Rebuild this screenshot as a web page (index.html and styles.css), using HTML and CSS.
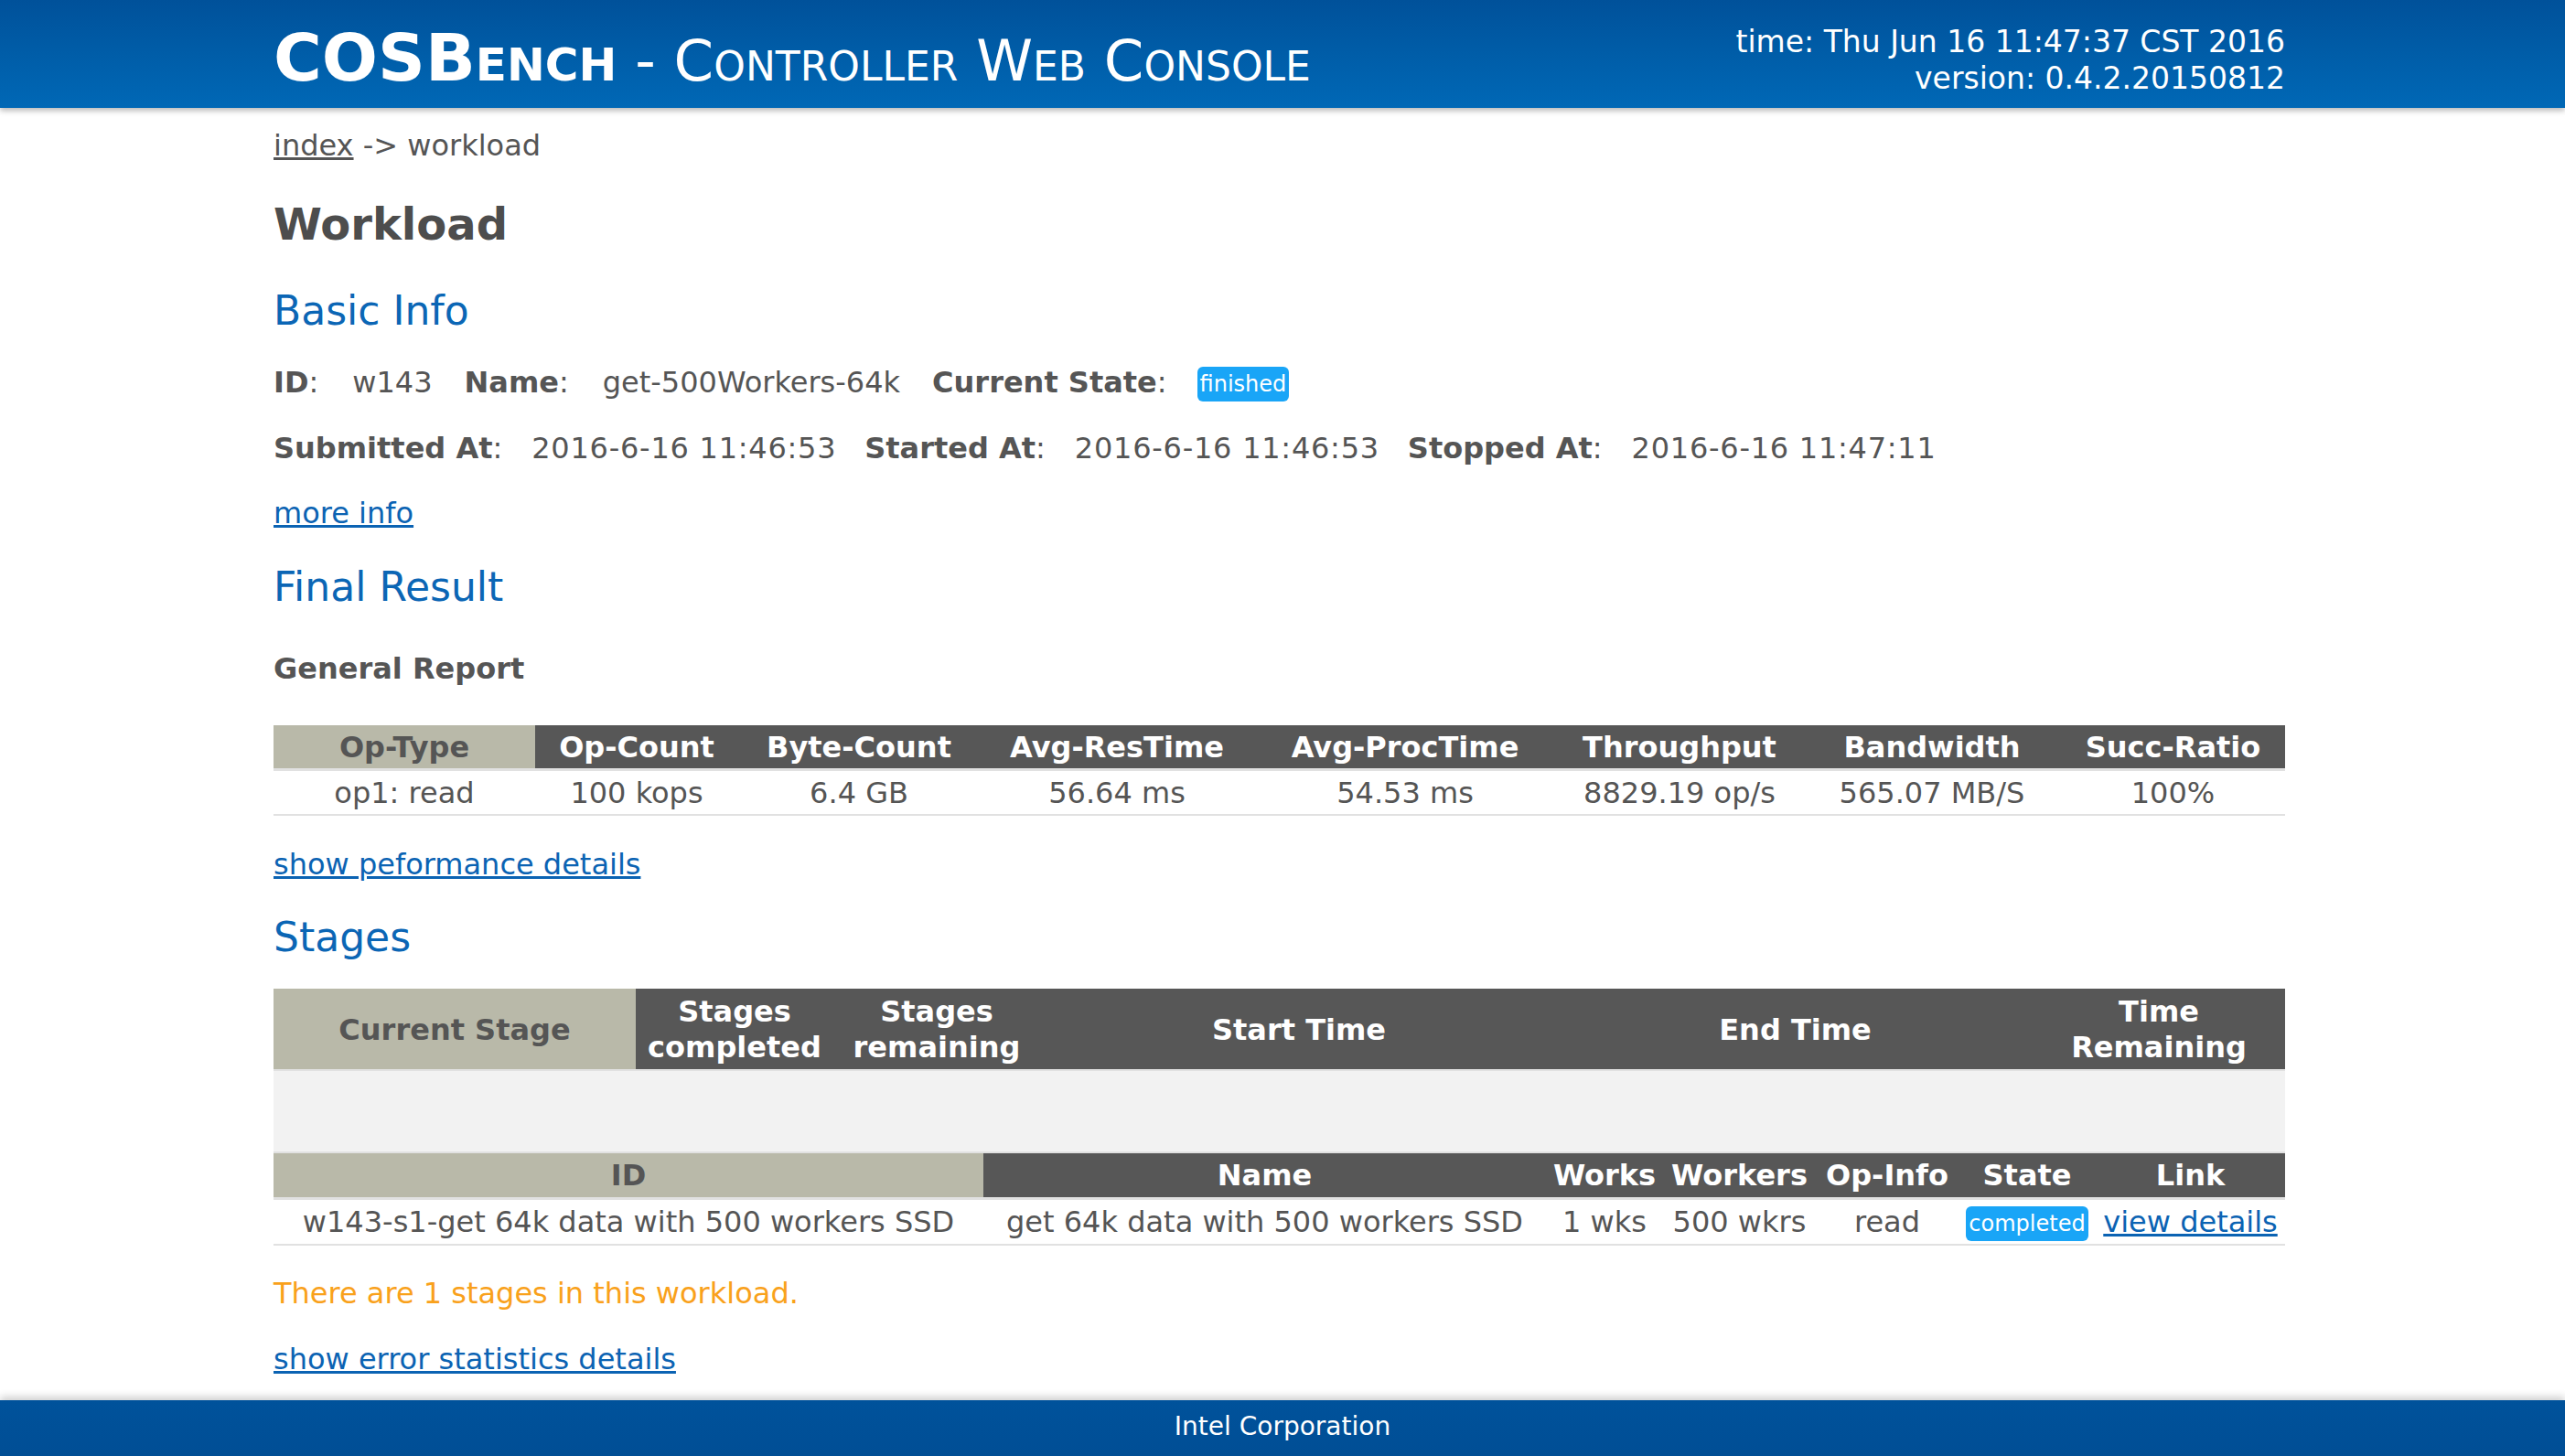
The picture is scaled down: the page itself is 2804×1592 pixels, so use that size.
FILE: index.html
```html
<!DOCTYPE html>
<html>
<head>
<meta charset="utf-8">
<title>COSBench - Controller Web Console</title>
<link rel="stylesheet" href="styles.css">
</head>
<body>
<header class="top">
  <div class="wrap top-inner">
    <h1 class="logo"><span class="brand">COSBench</span> - Controller Web Console</h1>
    <div class="meta">
      <div>time: Thu Jun 16 11:47:37 CST 2016</div>
      <div>version: 0.4.2.20150812</div>
    </div>
  </div>
</header>

<main class="wrap content">
  <div class="crumb"><a href="#" class="crumb-link">index</a> -&gt; workload</div>
  <h1 class="page-title">Workload</h1>

  <h2 class="section">Basic Info</h2>
  <div class="info line1"><b>ID</b>:<span class="v">w143</span><b>Name</b>:<span class="v">get-500Workers-64k</span><b>Current State</b>:<span class="badge state-badge">finished</span></div>
  <div class="info line2"><b>Submitted At</b>:<span class="d">2016-6-16 11:46:53</span><b>Started At</b>:<span class="d">2016-6-16 11:46:53</span><b>Stopped At</b>:<span class="d">2016-6-16 11:47:11</span></div>
  <div class="more"><a href="#" class="link">more info</a></div>

  <h2 class="section final">Final Result</h2>
  <h4 class="sub">General Report</h4>
  <table class="grid report">
    <colgroup>
      <col style="width:286px"><col style="width:222px"><col style="width:264px"><col style="width:300px"><col style="width:330px"><col style="width:270px"><col style="width:282px"><col style="width:245px">
    </colgroup>
    <thead>
      <tr><th class="key">Op-Type</th><th>Op-Count</th><th>Byte-Count</th><th>Avg-ResTime</th><th>Avg-ProcTime</th><th>Throughput</th><th>Bandwidth</th><th>Succ-Ratio</th></tr>
    </thead>
    <tbody>
      <tr><td>op1: read</td><td>100 kops</td><td>6.4 GB</td><td>56.64 ms</td><td>54.53 ms</td><td>8829.19 op/s</td><td>565.07 MB/S</td><td>100%</td></tr>
    </tbody>
  </table>
  <div class="perf"><a href="#" class="link">show peformance details</a></div>

  <h2 class="section stages-title">Stages</h2>
  <table class="grid stages">
    <colgroup>
      <col style="width:396px"><col style="width:216px"><col style="width:226px"><col style="width:566px"><col style="width:519px"><col style="width:276px">
    </colgroup>
    <thead>
      <tr><th class="key">Current Stage</th><th>Stages<br>completed</th><th>Stages<br>remaining</th><th>Start Time</th><th>End Time</th><th>Time<br>Remaining</th></tr>
    </thead>
    <tbody>
      <tr class="empty"><td colspan="6"></td></tr>
    </tbody>
  </table>
  <table class="grid stage-list">
    <colgroup>
      <col style="width:776px"><col style="width:615px"><col style="width:128px"><col style="width:167px"><col style="width:156px"><col style="width:150px"><col style="width:207px">
    </colgroup>
    <thead>
      <tr><th class="key">ID</th><th>Name</th><th>Works</th><th>Workers</th><th>Op-Info</th><th>State</th><th>Link</th></tr>
    </thead>
    <tbody>
      <tr><td>w143-s1-get 64k data with 500 workers SSD</td><td>get 64k data with 500 workers SSD</td><td>1 wks</td><td>500 wkrs</td><td>read</td><td><span class="badge">completed</span></td><td><a href="#" class="link">view details</a></td></tr>
    </tbody>
  </table>

  <p class="note">There are 1 stages in this workload.</p>
  <div class="errors"><a href="#" class="link">show error statistics details</a></div>
</main>

<footer class="bottom">Intel Corporation</footer>
</body>
</html>
```

FILE: styles.css
```css
html, body {
  margin: 0;
  padding: 0;
  background: #ffffff;
}

body {
  font-family: "DejaVu Sans", Verdana, sans-serif;
  font-size: 32px;
  color: #555555;
}

.wrap {
  width: 2199px;
  margin-left: calc(50% - 1103px);
}

/* header */
.top {
  height: 118px;
  box-sizing: border-box;
  padding-top: 14px;
  background: linear-gradient(to bottom, #00519a 0%, #005da8 50%, #0068b6 100%);
  box-shadow: 0 3px 6px rgba(0, 0, 0, 0.28);
  color: #ffffff;
}

.top-inner {
  display: flex;
  justify-content: space-between;
  align-items: center;
  height: 104px;
}

.logo {
  margin: 0;
  font-size: 62.5px;
  font-weight: normal;
  font-variant: small-caps;
  line-height: 80px;
  white-space: nowrap;
  position: relative;
  top: -1px;
}

.brand {
  font-size: 72px;
  font-weight: bold;
}

.meta {
  text-align: right;
  font-size: 33px;
  line-height: 40px;
  white-space: nowrap;
}

/* content */
.content {
  padding-top: 21px;
}

.crumb {
  line-height: 40px;
}

.crumb-link {
  color: #555555;
  text-decoration: underline;
}

.page-title {
  margin: 36px 0 0;
  font-size: 48px;
  line-height: 60px;
  font-weight: bold;
  color: #4d4d4d;
}

.section {
  margin: 37px 0 0;
  font-size: 44px;
  line-height: 56px;
  font-weight: normal;
  color: #0b66b5;
}

.info {
  line-height: 44px;
  white-space: nowrap;
}

.info b {
  font-weight: bold;
}

.line1 {
  margin-top: 28px;
}

.line1 .v {
  margin: 0 35px 0 37px;
}

.line2 {
  margin-top: 28px;
}

.line2 .d {
  margin: 0 31px 0 32px;
  letter-spacing: 0.75px;
}

.badge {
  display: inline-block;
  vertical-align: middle;
  background: #19a5f7;
  color: #ffffff;
  font-size: 24px;
  line-height: 32px;
  padding: 3px 3px;
  border-radius: 6px;
}

.state-badge {
  margin-left: 33px;
}

.link {
  color: #0b63b3;
  text-decoration: underline;
}

.more {
  margin-top: 29px;
  line-height: 40px;
}

.final {
  margin-top: 33px;
}

.sub {
  margin: 41px 0 0;
  font-size: 32px;
  line-height: 40px;
  font-weight: bold;
  color: #555555;
}

/* tables */
.grid {
  width: 2199px;
  table-layout: fixed;
  border-collapse: collapse;
  border-spacing: 0;
}

.grid th {
  background: #575757;
  color: #ffffff;
  font-weight: bold;
  text-align: center;
  padding: 0;
  white-space: nowrap;
}

.grid th.key {
  background: #b9b9a9;
  color: #555555;
}

.grid td {
  text-align: center;
  padding: 0;
  white-space: nowrap;
  border-top: 3px solid #e1e1e1;
  border-bottom: 2px solid #e1e1e1;
}

.report {
  margin-top: 42px;
}

.report th {
  line-height: 45px;
  padding-top: 2px;
}

.report td {
  line-height: 45px;
  padding-top: 2px;
}

.perf {
  margin-top: 33px;
  line-height: 40px;
}

.stages-title {
  margin-top: 32px;
}

.stages {
  margin-top: 28px;
}

.stages th {
  line-height: 39px;
  padding: 6px 0 4px;
}

.stages .empty td {
  height: 88px;
  background: #f2f2f2;
  border-top: 2px solid #e1e1e1;
  border-bottom: 0;
}

.stage-list {
  border-top: 2px solid #e1e1e1;
}

.stage-list th {
  line-height: 47px;
  padding-top: 1px;
}

.stage-list td {
  line-height: 48px;
}

.note {
  margin: 32px 0 0;
  line-height: 40px;
  color: #f9a11b;
}

.errors {
  margin-top: 32px;
  line-height: 40px;
}

/* footer */
.bottom {
  margin-top: 25px;
  height: 61px;
  line-height: 58px;
  text-align: center;
  font-size: 28px;
  color: #ffffff;
  background: linear-gradient(to bottom, #00529b 0%, #004e95 100%);
  box-shadow: 0 -4px 8px rgba(0, 0, 0, 0.18);
}
```
